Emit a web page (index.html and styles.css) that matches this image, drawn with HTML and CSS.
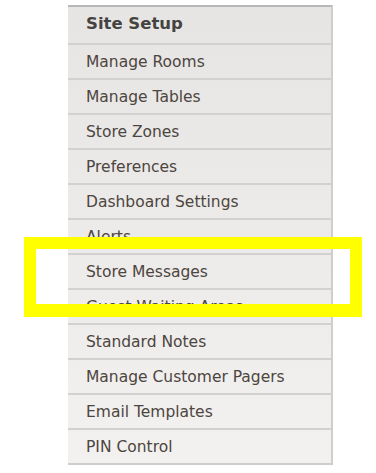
FILE: index.html
```html
<!DOCTYPE html>
<html lang="en">
<head>
    <meta charset="UTF-8">
    <meta name="viewport" content="width=device-width, initial-scale=1.0">
    <title>Site Setup</title>
    <link rel="stylesheet" href="styles.css">
</head>
<body>
    <div class="menu">
        <div class="menu-title">Site Setup</div>
        <a class="menu-item" href="#">Manage Rooms</a>
        <a class="menu-item" href="#">Manage Tables</a>
        <a class="menu-item" href="#">Store Zones</a>
        <a class="menu-item" href="#">Preferences</a>
        <a class="menu-item" href="#">Dashboard Settings</a>
        <a class="menu-item" href="#">Alerts</a>
        <a class="menu-item" href="#">Store Messages</a>
        <a class="menu-item" href="#">Guest Waiting Areas</a>
        <a class="menu-item" href="#">Standard Notes</a>
        <a class="menu-item" href="#">Manage Customer Pagers</a>
        <a class="menu-item" href="#">Email Templates</a>
        <a class="menu-item" href="#">PIN Control</a>
    </div>
    <div class="highlight"></div>
</body>
</html>
```

FILE: styles.css
```css
body {
    margin: 0;
    background-color: #fff;
    font-family: 'DejaVu Sans', Verdana, sans-serif;
}
.menu {
    width: 263px;
    margin: 5px 0 0 68px;
    border-top: 2px solid #b9b8b6;
    border-right: 2px solid #cfcecc;
    border-bottom: 2px solid #cfcecc;
    background: linear-gradient(#e6e5e3, #f2f1ef);
    display: flex;
    flex-direction: column;
}
.menu-title {
    height: 36px;
    line-height: 33px;
    padding-left: 18px;
    font-size: 16.5px;
    font-weight: bold;
    color: #454341;
    border-bottom: 2px solid #d2d1cf;
}
.menu-item {
    height: 32px;
    line-height: 32px;
    padding: 1px 0 0 18px;
    font-size: 15.5px;
    color: #4d4540;
    text-decoration: none;
    border-bottom: 2px solid #d2d1cf;
}
.menu-item:last-child {
    border-bottom: none;
}
.highlight {
    position: absolute;
    left: 24px;
    top: 237px;
    width: 314px;
    height: 55px;
    border: 12px solid #ffff00;
    border-bottom-width: 13px;
}
```
